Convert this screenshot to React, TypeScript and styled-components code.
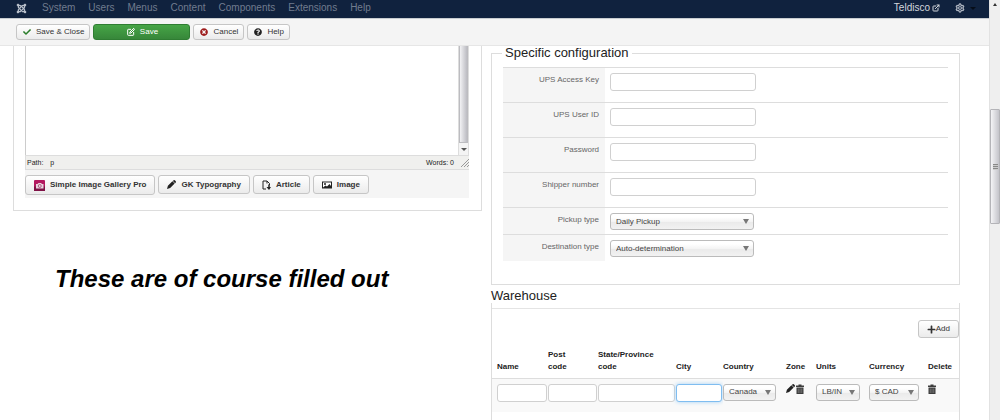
import React from "react";
import styled, { createGlobalStyle } from "styled-components";
import { FaJoomla, FaCheck, FaTimesCircle, FaQuestionCircle, FaPlus } from "react-icons/fa";
import { FiExternalLink, FiEdit } from "react-icons/fi";
import { AiOutlineSetting } from "react-icons/ai";

const GlobalStyle = createGlobalStyle`
  * { box-sizing: border-box; }
  body { margin: 0; background: #fff; color: #222; font: 8px/12px "Liberation Sans", Arial, sans-serif; }
  button, input, select { font: inherit; color: inherit; margin: 0; }
`;

const Shell = styled.div`
  display: flex;
  min-height: 100vh;
`;

const Page = styled.div`
  flex: 1;
  min-width: 0;
  display: flex;
  flex-direction: column;
`;

const NavBar = styled.nav`
  display: flex;
  align-items: center;
  height: 18px;
  padding: 0 13px 0 16px;
  background: #10223e;
  font-size: 10px;
  line-height: 16px;
`;

const Logo = styled(FaJoomla)`
  width: 11px;
  height: 11px;
  margin: 0 15px 2px 0;
  color: #b9c0cb;
`;

const NavList = styled.ul`
  display: flex;
  flex: 1;
  gap: 13px;
  margin: 0;
  padding: 0 0 2px;
  list-style: none;
`;

const NavLink = styled.a<{ $bright?: boolean }>`
  display: inline-flex;
  align-items: center;
  gap: 2px;
  color: ${(p) => (p.$bright ? "#d3d7dd" : "#707c8e")};
  text-decoration: none;
`;

const NavTools = styled.div`
  display: flex;
  align-items: center;
  gap: 15px;
  padding-bottom: 2px;
`;

const GearButton = styled.button`
  display: flex;
  align-items: center;
  gap: 5px;
  padding: 0;
  border: 0;
  background: none;
  color: #c3c9d2;
  svg { stroke: currentColor; stroke-width: 40; }
`;

const Caret = styled.span<{ $color: string; $tall?: boolean }>`
  border: solid transparent;
  border-width: ${(p) => (p.$tall ? "5px" : "3px")} 3px 0;
  border-top-color: ${(p) => p.$color};
`;

const Toolbar = styled.div`
  display: flex;
  gap: 3px;
  height: 28px;
  padding: 5px 16px;
  border-top: 1px solid #c8ccd0;
  border-bottom: 1px solid #e6e6e6;
  background: #f4f4f4;
`;

const Button = styled.button<{ $primary?: boolean; $bold?: boolean; $height?: number }>`
  display: inline-flex;
  align-items: center;
  justify-content: center;
  gap: 5px;
  height: ${(p) => p.$height ?? 16}px;
  min-width: ${(p) => (p.$primary ? "97px" : "0")};
  padding: ${(p) => (p.$bold ? "0 8px" : "0 5px 0 6px")};
  border: 1px solid ${(p) => (p.$primary ? "#2f7d32" : "#c6c6c6")};
  border-radius: 3px;
  background: ${(p) => (p.$primary ? "linear-gradient(#46a546, #37873a)" : "linear-gradient(#fff, #ebebeb)")};
  color: ${(p) => (p.$primary ? "#fff" : "#333")};
  font-weight: ${(p) => (p.$bold ? "bold" : "normal")};
  white-space: nowrap;
`;

const Columns = styled.main`
  flex: 1;
  display: grid;
  grid-template-columns: 1fr 1fr;
  gap: 9px;
  padding: 0 29px 0 13px;
`;

const Column = styled.div`
  display: flex;
  flex-direction: column;
  min-width: 0;
`;

const EditorPanel = styled.section`
  padding: 0 12px 12px 11px;
  border: 1px solid #ddd;
  border-top: 0;
`;

const EditorFrame = styled.div`
  display: flex;
  height: 109px;
  border-left: 1px solid #ccc;
`;

const EditorText = styled.div`
  flex: 1;
`;

const EditorScroll = styled.div`
  display: flex;
  flex-direction: column;
  align-items: center;
  width: 11px;
  padding-bottom: 4px;
  border: solid #ddd;
  border-width: 0 1px;
  background: #f4f4f4;
`;

const EditorThumb = styled.div`
  flex: 1;
  align-self: stretch;
  margin-bottom: 5px;
  border: 1px solid #bcbcc0;
  border-top: 0;
  background: linear-gradient(90deg, #f2f2f4, #bcbcc2);
`;

const StatusBar = styled.div`
  display: flex;
  align-items: center;
  gap: 7px;
  height: 15px;
  padding-left: 1px;
  border: solid #ddd;
  border-width: 1px 0 1px 1px;
  background: #f0f0ee;
  color: #222;
  font-size: 7px;
`;

const WordCount = styled.span`
  margin-left: auto;
`;

const EditorButtons = styled.div`
  display: flex;
  align-items: flex-start;
  gap: 3px;
  padding: 5px 0 3px;
  background: #f5f5f5;
`;

const Note = styled.p`
  margin: 54px 0 0 42px;
  color: #000;
  font-size: 24px;
  font-style: italic;
  font-weight: bold;
  line-height: 28px;
`;

const Fieldset = styled.fieldset`
  min-width: 0;
  margin: 0;
  padding: 7px 11px 23px;
  border: 1px solid #ddd;
`;

const Legend = styled.legend`
  margin-left: -1px;
  padding: 0 3px;
  font-size: 13px;
  line-height: 14px;
`;

const ConfigRow = styled.div<{ $tall?: boolean }>`
  display: grid;
  grid-template-columns: 102px 1fr;
  height: ${(p) => (p.$tall ? 35 : 27)}px;
  border-top: 1px solid #ddd;
`;

const ConfigLabel = styled.label`
  padding: 6px 6px 0 0;
  background: #f5f5f5;
  color: #666;
  text-align: right;
`;

const ConfigValue = styled.div`
  padding: 5px 0 0 5px;
`;

const TextInput = styled.input<{ $width?: string }>`
  display: block;
  width: ${(p) => p.$width ?? "100%"};
  height: 18px;
  padding: 0 4px;
  border: 1px solid #d0d0d0;
  border-radius: 3px;
  outline: 0;
  background: #fff;
  &:focus {
    border-color: #7fbdf0;
    box-shadow: 0 0 4px #a5d2f6;
  }
`;

const SelectBox = styled.span<{ $width: number }>`
  display: grid;
  align-items: center;
  width: ${(p) => p.$width}px;
  & > * { grid-area: 1 / 1; }
  & > span { justify-self: end; margin-right: 5px; pointer-events: none; }
`;

const Select = styled.select`
  appearance: none;
  width: 100%;
  height: 17px;
  padding: 0 5px;
  border: 1px solid #bbb;
  border-radius: 3px;
  background: linear-gradient(#fff 20%, #f4f4f4 50%, #eaeaea 52%, #f2f2f2);
  color: #444;
`;

const WarehouseTitle = styled.h2`
  margin: 4px 0 0;
  font-size: 13px;
  font-weight: normal;
  line-height: 14px;
`;

const WarehousePanel = styled.section`
  flex: 1;
  border: solid #ddd;
  border-width: 0 1px;
`;

const AddBar = styled.div`
  display: flex;
  justify-content: flex-end;
  margin-top: 5px;
  padding-top: 11px;
  border-top: 1px solid #e4e4e4;
  button { gap: 0; padding: 0 8px; }
`;

const Table = styled.table`
  width: 100%;
  margin-top: 9px;
  border-collapse: collapse;
  table-layout: fixed;
`;

const HeadCell = styled.th<{ $width: number }>`
  width: ${(p) => p.$width}px;
  height: 31px;
  padding: 0 0 5px;
  border-bottom: 1px solid #ddd;
  text-align: left;
  vertical-align: bottom;
  white-space: pre-line;
  &:first-child { padding-left: 5px; }
`;

const Cell = styled.td`
  height: 34px;
  padding: 5px 1px 0 0;
  background: #f9f9f9;
  vertical-align: top;
  &:first-child { padding-left: 5px; }
`;

const IconButton = styled.button`
  padding: 0;
  border: 0;
  background: none;
  color: #333;
  line-height: 10px;
  svg { display: block; }
`;

const IconPair = styled.div`
  display: flex;
  gap: 1px;
`;

const Scrollbar = styled.div`
  display: flex;
  flex-direction: column;
  align-items: center;
  width: 11px;
  padding-top: 3px;
  border-left: 1px solid #e2e2e2;
  background: #efefef;
`;

const ScrollThumb = styled.div`
  display: flex;
  align-items: center;
  justify-content: center;
  align-self: stretch;
  height: 115px;
  margin-top: 103px;
  border: 1px solid #b4b4b8;
  border-radius: 1px;
  background: linear-gradient(90deg, #f4f4f6, #c4c4ca);
`;

const Grip = styled.div`
  width: 5px;
  height: 6px;
  background: repeating-linear-gradient(#888 0 1px, #ccc 1px 2px);
`;

const UpArrow = styled.div`
  border: solid transparent;
  border-width: 0 2px 3px;
  border-bottom-color: #333;
`;

const GalleryIcon = () => (
  <svg width="11" height="11" viewBox="0 0 22 22" aria-hidden="true">
    <rect width="22" height="22" rx="2" fill="#b3195f" />
    <rect y="13" width="22" height="9" fill="#7f1246" />
    <path d="M4 8h3l2-2h5l2 2h3v9H4z" fill="#e9d3de" />
    <circle cx="11.500" cy="12" r="3" fill="#e9d3de" stroke="#9b3b68" strokeWidth="1.500" />
  </svg>
);

const PencilIcon = ({ size }: { size: number }) => (
  <svg width={size} height={size} viewBox="0 0 20 20" fill="#222" aria-hidden="true">
    <path d="M0 20l2-7L12 3l5 5L7 18zM13 2l1-1q2-2 4 0l1 1q2 2 0 4l-1 1z" />
  </svg>
);

const ArticleIcon = () => (
  <svg width="9" height="10" viewBox="0 0 18 20" fill="none" stroke="#222" strokeWidth="2" aria-hidden="true">
    <path d="M8 18H2V2h8l5 5v3M10 2v5" />
    <path d="M14 9v8" strokeWidth="3" />
    <path d="M9 14h9l-4 6z" fill="#222" stroke="none" />
  </svg>
);

const ImageIcon = () => (
  <svg width="10" height="8" viewBox="0 0 20 16" aria-hidden="true">
    <path d="M0 1h20v14H0z" fill="#222" />
    <path d="M2 3h16v7l-3-4-5 5-3-2-5 4z" fill="#fff" />
    <circle cx="6" cy="6" r="2" fill="#222" />
  </svg>
);

const TrashIcon = () => (
  <svg width="8" height="10" viewBox="0 0 16 20" aria-hidden="true">
    <path d="M5 3V1h6v2h5v3H0V3zM1 7h14v13H1z" fill="#3c3c3c" />
    <path d="M4.500 9v9M8 9v9M11.500 9v9" stroke="#aaa" strokeWidth="1" />
  </svg>
);

const ResizeGrip = () => (
  <svg width="8" height="8" viewBox="0 0 8 8" stroke="#999" aria-hidden="true">
    <path d="M0 8L8 0M3 8l5-5M6 8l2-2" />
  </svg>
);

const menu = ["System", "Users", "Menus", "Content", "Components", "Extensions", "Help"];
const textFields = ["UPS Access Key", "UPS User ID", "Password", "Shipper number"];
const choiceFields = [
  ["Pickup type", "Daily Pickup"],
  ["Destination type", "Auto-determination"],
];
const columns: [string, number][] = [
  ["Name", 56],
  ["Post\ncode", 50],
  ["State/Province\ncode", 78],
  ["City", 47],
  ["Country", 63],
  ["Zone", 30],
  ["Units", 53],
  ["Currency", 59],
  ["Delete", 31],
];

function Choice({ value, width, id, label }: { value: string; width: number; id?: string; label?: string }) {
  return (
    <SelectBox $width={width}>
      <Select id={id} aria-label={label}>
        <option>{value}</option>
      </Select>
      <Caret $color="#777" $tall />
    </SelectBox>
  );
}

export default function App() {
  return (
    <Shell>
      <GlobalStyle />
      <Page>
        <NavBar>
          <Logo />
          <NavList>
            {menu.map((item) => (
              <li key={item}>
                <NavLink href="#">{item}</NavLink>
              </li>
            ))}
          </NavList>
          <NavTools>
            <NavLink href="#" $bright>
              Teldisco <FiExternalLink size={8} strokeWidth={3} />
            </NavLink>
            <GearButton aria-label="Settings">
              <AiOutlineSetting size={10} />
              <Caret $color="#060d18" />
            </GearButton>
          </NavTools>
        </NavBar>
        <Toolbar>
          <Button><FaCheck size={8} color="#2a7d2a" />Save &amp; Close</Button>
          <Button $primary><FiEdit size={8} strokeWidth={3} />Save</Button>
          <Button><FaTimesCircle size={8} color="#9d1c1c" />Cancel</Button>
          <Button><FaQuestionCircle size={8} color="#222" />Help</Button>
        </Toolbar>
        <Columns>
          <Column>
            <EditorPanel>
              <EditorFrame>
                <EditorText />
                <EditorScroll>
                  <EditorThumb />
                  <Caret $color="#555" />
                </EditorScroll>
              </EditorFrame>
              <StatusBar>
                <span>Path:</span>
                <span>p</span>
                <WordCount>Words: 0</WordCount>
                <ResizeGrip />
              </StatusBar>
              <EditorButtons>
                <Button $bold $height={20}><GalleryIcon />Simple Image Gallery Pro</Button>
                <Button $bold $height={19}><PencilIcon size={9} />GK Typography</Button>
                <Button $bold $height={19}><ArticleIcon />Article</Button>
                <Button $bold $height={19}><ImageIcon />Image</Button>
              </EditorButtons>
            </EditorPanel>
            <Note>These are of course filled out</Note>
          </Column>
          <Column>
            <Fieldset>
              <Legend>Specific configuration</Legend>
              {textFields.map((name, i) => (
                <ConfigRow key={name} $tall>
                  <ConfigLabel htmlFor={`text-${i}`}>{name}</ConfigLabel>
                  <ConfigValue>
                    <TextInput id={`text-${i}`} $width="146px" />
                  </ConfigValue>
                </ConfigRow>
              ))}
              {choiceFields.map(([name, value], i) => (
                <ConfigRow key={name}>
                  <ConfigLabel htmlFor={`choice-${i}`}>{name}</ConfigLabel>
                  <ConfigValue>
                    <Choice id={`choice-${i}`} value={value} width={144} />
                  </ConfigValue>
                </ConfigRow>
              ))}
            </Fieldset>
            <WarehouseTitle>Warehouse</WarehouseTitle>
            <WarehousePanel>
              <AddBar>
                <Button $height={18}><FaPlus size={9} />Add</Button>
              </AddBar>
              <Table>
                <thead>
                  <tr>
                    {columns.map(([name, width]) => (
                      <HeadCell key={name} $width={width}>{name}</HeadCell>
                    ))}
                  </tr>
                </thead>
                <tbody>
                  <tr>
                    <Cell><TextInput aria-label="Name" /></Cell>
                    <Cell><TextInput aria-label="Post code" /></Cell>
                    <Cell><TextInput aria-label="State/Province code" /></Cell>
                    <Cell><TextInput aria-label="City" autoFocus /></Cell>
                    <Cell><Choice label="Country" value="Canada" width={53} /></Cell>
                    <Cell>
                      <IconPair>
                        <IconButton aria-label="Edit zone"><PencilIcon size={9} /></IconButton>
                        <IconButton aria-label="Clear zone"><TrashIcon /></IconButton>
                      </IconPair>
                    </Cell>
                    <Cell><Choice label="Units" value="LB/IN" width={44} /></Cell>
                    <Cell><Choice label="Currency" value="$ CAD" width={50} /></Cell>
                    <Cell><IconButton aria-label="Delete"><TrashIcon /></IconButton></Cell>
                  </tr>
                </tbody>
              </Table>
            </WarehousePanel>
          </Column>
        </Columns>
      </Page>
      <Scrollbar>
        <UpArrow />
        <ScrollThumb><Grip /></ScrollThumb>
      </Scrollbar>
    </Shell>
  );
}
